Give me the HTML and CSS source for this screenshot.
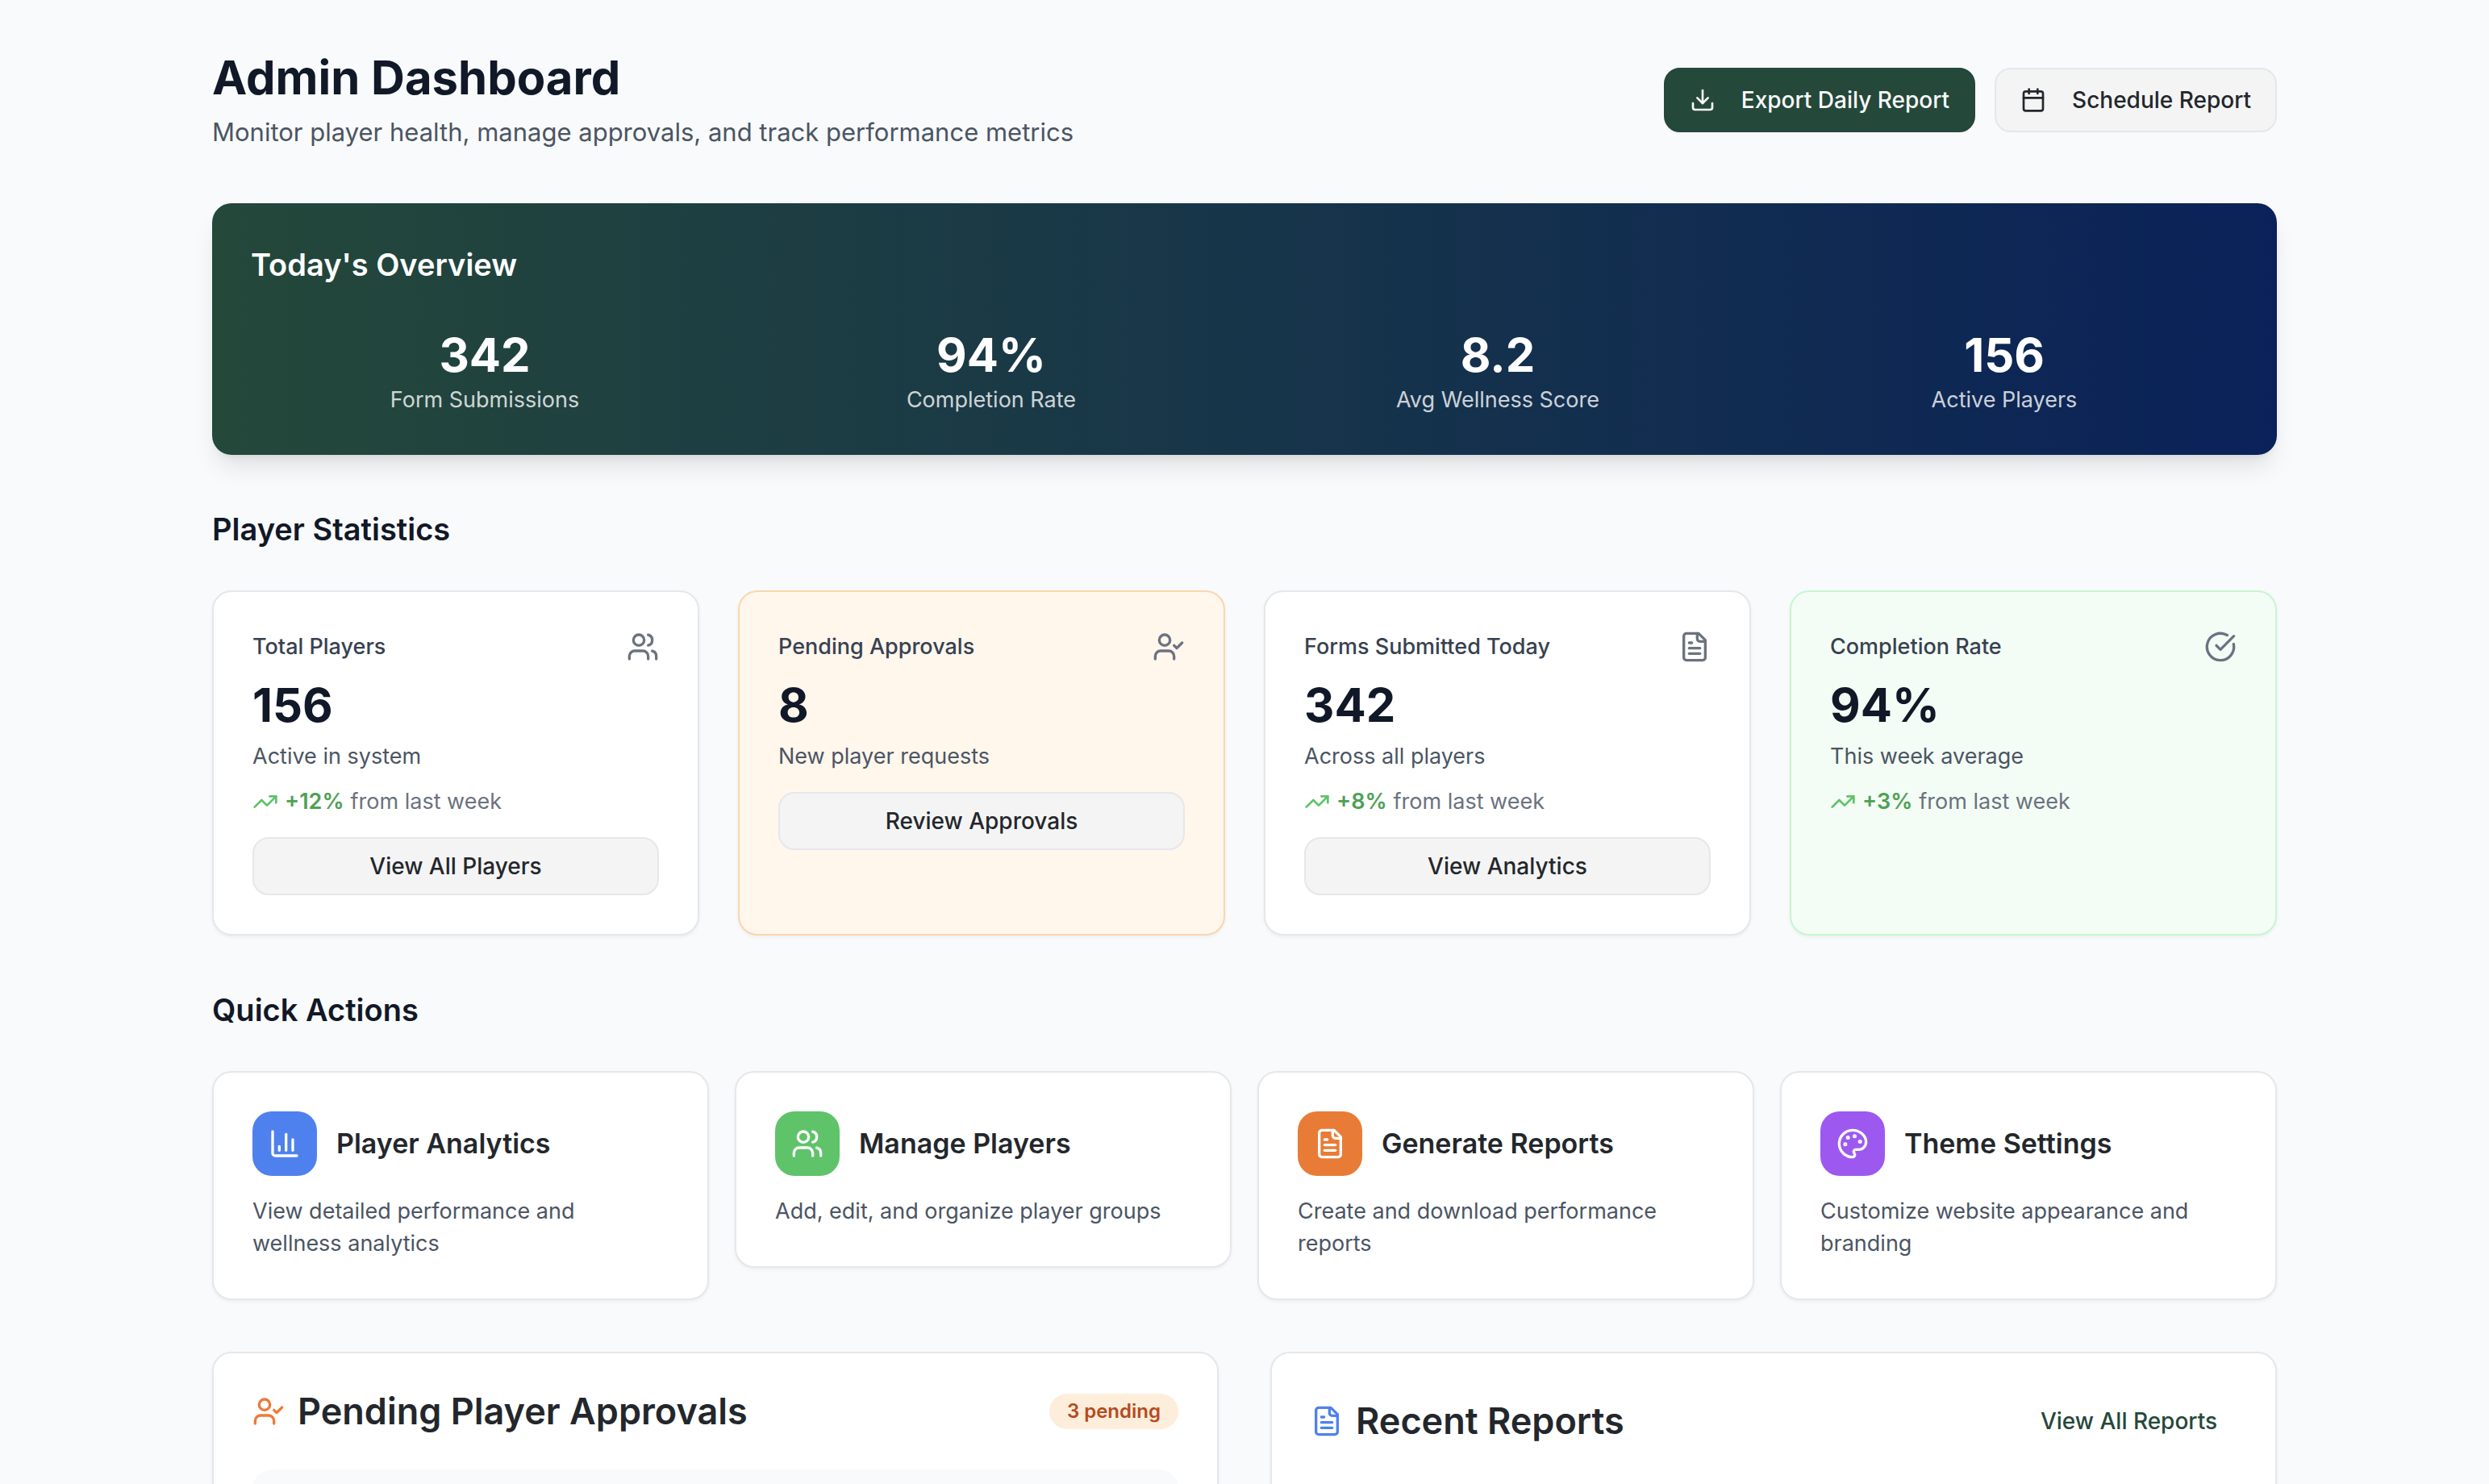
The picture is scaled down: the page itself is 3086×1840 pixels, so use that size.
FILE: index.html
```html
<!DOCTYPE html>
<html lang="en">
<head>
<meta charset="utf-8">
<title>Admin Dashboard</title>
<link rel="stylesheet" href="styles.css">
</head>
<body>
<svg class="sprite" aria-hidden="true">
  <symbol id="i-download" viewBox="0 0 24 24"><path d="M12 15V3"/><path d="M21 15v4a2 2 0 0 1-2 2H5a2 2 0 0 1-2-2v-4"/><path d="m7 10 5 5 5-5"/></symbol>
  <symbol id="i-calendar" viewBox="0 0 24 24"><path d="M8 2v4"/><path d="M16 2v4"/><rect width="18" height="18" x="3" y="4" rx="2"/><path d="M3 10h18"/></symbol>
  <symbol id="i-users" viewBox="0 0 24 24"><path d="M16 21v-2a4 4 0 0 0-4-4H6a4 4 0 0 0-4 4v2"/><circle cx="9" cy="7" r="4"/><path d="M22 21v-2a4 4 0 0 0-3-3.87"/><path d="M16 3.13a4 4 0 0 1 0 7.75"/></symbol>
  <symbol id="i-user-check" viewBox="0 0 24 24"><path d="m16 11 2 2 4-4"/><path d="M16 21v-2a4 4 0 0 0-4-4H6a4 4 0 0 0-4 4v2"/><circle cx="9" cy="7" r="4"/></symbol>
  <symbol id="i-file" viewBox="0 0 24 24"><path d="M15 2H6a2 2 0 0 0-2 2v16a2 2 0 0 0 2 2h12a2 2 0 0 0 2-2V7Z"/><path d="M14 2v4a2 2 0 0 0 2 2h4"/><path d="M10 9H8"/><path d="M16 13H8"/><path d="M16 17H8"/></symbol>
  <symbol id="i-check" viewBox="0 0 24 24"><path d="M21.801 10A10 10 0 1 1 17 3.335"/><path d="m9 11 3 3L22 4"/></symbol>
  <symbol id="i-trend" viewBox="0 0 24 24"><path d="M22 7l-8.5 8.5-5-5L2 17"/><path d="M16 7h6v6"/></symbol>
  <symbol id="i-chart" viewBox="0 0 24 24"><path d="M3 3v16a2 2 0 0 0 2 2h16"/><path d="M18 17V9"/><path d="M13 17V5"/><path d="M8 17v-3"/></symbol>
  <symbol id="i-palette" viewBox="0 0 24 24"><circle cx="13.5" cy="6.5" r=".5" fill="currentColor"/><circle cx="17.5" cy="10.5" r=".5" fill="currentColor"/><circle cx="8.5" cy="7.5" r=".5" fill="currentColor"/><circle cx="6.5" cy="12.5" r=".5" fill="currentColor"/><path d="M12 2C6.5 2 2 6.5 2 12s4.5 10 10 10c.926 0 1.648-.746 1.648-1.688 0-.437-.18-.835-.437-1.125-.29-.289-.438-.652-.438-1.125a1.64 1.64 0 0 1 1.668-1.668h1.996c3.051 0 5.555-2.503 5.555-5.554C21.965 6.012 17.461 2 12 2z"/></symbol>
</svg>
<main class="page">
  <header class="page-header">
    <div class="page-intro">
      <h1 class="page-title">Admin Dashboard</h1>
      <p class="page-subtitle">Monitor player health, manage approvals, and track performance metrics</p>
    </div>
    <div class="page-actions">
      <button class="btn btn-large btn-primary" type="button"><svg class="icon icon-small"><use href="#i-download"/></svg>Export Daily Report</button>
      <button class="btn btn-large" type="button"><svg class="icon icon-small"><use href="#i-calendar"/></svg>Schedule Report</button>
    </div>
  </header>

  <section class="overview">
    <h2 class="section-title">Today's Overview</h2>
    <dl class="overview-grid">
      <div class="overview-item"><dt class="overview-label">Form Submissions</dt><dd class="big-number">342</dd></div>
      <div class="overview-item"><dt class="overview-label">Completion Rate</dt><dd class="big-number">94%</dd></div>
      <div class="overview-item"><dt class="overview-label">Avg Wellness Score</dt><dd class="big-number">8.2</dd></div>
      <div class="overview-item"><dt class="overview-label">Active Players</dt><dd class="big-number">156</dd></div>
    </dl>
  </section>

  <section class="section">
    <h2 class="section-title">Player Statistics</h2>
    <div class="stats-grid">
      <article class="card">
        <div class="stat-head"><h3 class="stat-title">Total Players</h3><svg class="icon"><use href="#i-users"/></svg></div>
        <p class="big-number">156</p>
        <p class="stat-note">Active in system</p>
        <p class="trend"><svg class="icon icon-small trend-icon"><use href="#i-trend"/></svg><strong class="trend-value">+12%</strong> <span>from last week</span></p>
        <button class="btn btn-block" type="button">View All Players</button>
      </article>
      <article class="card card-warning">
        <div class="stat-head"><h3 class="stat-title">Pending Approvals</h3><svg class="icon"><use href="#i-user-check"/></svg></div>
        <p class="big-number">8</p>
        <p class="stat-note">New player requests</p>
        <button class="btn btn-block" type="button">Review Approvals</button>
      </article>
      <article class="card">
        <div class="stat-head"><h3 class="stat-title">Forms Submitted Today</h3><svg class="icon"><use href="#i-file"/></svg></div>
        <p class="big-number">342</p>
        <p class="stat-note">Across all players</p>
        <p class="trend"><svg class="icon icon-small trend-icon"><use href="#i-trend"/></svg><strong class="trend-value">+8%</strong> <span>from last week</span></p>
        <button class="btn btn-block" type="button">View Analytics</button>
      </article>
      <article class="card card-success">
        <div class="stat-head"><h3 class="stat-title">Completion Rate</h3><svg class="icon"><use href="#i-check"/></svg></div>
        <p class="big-number">94%</p>
        <p class="stat-note">This week average</p>
        <p class="trend"><svg class="icon icon-small trend-icon"><use href="#i-trend"/></svg><strong class="trend-value">+3%</strong> <span>from last week</span></p>
      </article>
    </div>
  </section>

  <section class="section">
    <h2 class="section-title">Quick Actions</h2>
    <div class="quick-grid">
      <a class="card quick" href="#analytics">
        <span class="quick-head"><span class="tile tile-blue"><svg class="icon"><use href="#i-chart"/></svg></span><span class="quick-title">Player Analytics</span></span>
        <span class="quick-text">View detailed performance and wellness analytics</span>
      </a>
      <a class="card quick" href="#players">
        <span class="quick-head"><span class="tile tile-green"><svg class="icon"><use href="#i-users"/></svg></span><span class="quick-title">Manage Players</span></span>
        <span class="quick-text">Add, edit, and organize player groups</span>
      </a>
      <a class="card quick" href="#reports">
        <span class="quick-head"><span class="tile tile-orange"><svg class="icon"><use href="#i-file"/></svg></span><span class="quick-title">Generate Reports</span></span>
        <span class="quick-text">Create and download performance reports</span>
      </a>
      <a class="card quick" href="#theme">
        <span class="quick-head"><span class="tile tile-purple"><svg class="icon"><use href="#i-palette"/></svg></span><span class="quick-title">Theme Settings</span></span>
        <span class="quick-text">Customize website appearance and branding</span>
      </a>
    </div>
  </section>

  <div class="panels">
    <section class="card">
      <div class="panel-head">
        <h2 class="panel-title"><svg class="icon icon-orange"><use href="#i-user-check"/></svg>Pending Player Approvals</h2>
        <span class="badge">3 pending</span>
      </div>
      <div class="request"></div>
    </section>
    <section class="card">
      <div class="panel-head">
        <h2 class="panel-title"><svg class="icon icon-blue"><use href="#i-file"/></svg>Recent Reports</h2>
        <button class="btn btn-ghost" type="button">View All Reports</button>
      </div>
    </section>
  </div>
</main>
</body>
</html>
```
FILE: styles.css
```css
* { box-sizing: border-box; }

body {
  margin: 0;
  height: 100vh;
  overflow: hidden;
  background: #f9fafc;
  color: #111827;
  font-family: Inter, "Liberation Sans", sans-serif;
  font-size: 27px;
  line-height: 40px;
}

h1, h2, h3, p, dl, dd { margin: 0; }

.sprite { display: none; }

.icon {
  flex: none;
  width: 40px;
  height: 40px;
  fill: none;
  stroke: currentColor;
  stroke-width: 2;
  stroke-linecap: round;
  stroke-linejoin: round;
}
.icon-small { width: 32px; height: 32px; }
.icon-orange { color: #ec7b36; }
.icon-blue { color: #4f81ee; }

.page {
  display: flex;
  flex-direction: column;
  gap: 64px;
  max-width: 2688px;
  margin: 0 auto;
  padding: 60px 64px;
}

.page-header {
  display: flex;
  align-items: center;
  justify-content: space-between;
}
.page-title {
  font-size: 58px;
  font-weight: 700;
  line-height: 72px;
}
.page-subtitle {
  margin-top: 8px;
  color: #4b5563;
  font-size: 31px;
  line-height: 48px;
}
.page-actions { display: flex; gap: 24px; }

.btn {
  display: flex;
  align-items: center;
  justify-content: center;
  height: 72px;
  padding: 0 22px;
  border: 2px solid #e5e7eb;
  border-radius: 20px;
  background: #f4f4f4;
  color: #23272c;
  font: inherit;
  font-size: 28px;
  font-weight: 500;
}
.btn-large { gap: 32px; height: 80px; padding: 0 30px; }
.btn-primary { border-color: #24483a; background: #24483a; color: #fafafa; }
.btn-block { width: 100%; margin-top: 24px; }
.btn-ghost { border-color: transparent; background: transparent; color: #24483a; }

.section-title {
  font-size: 38px;
  font-weight: 600;
  line-height: 56px;
}
.big-number {
  font-size: 58px;
  font-weight: 700;
  line-height: 72px;
}

.overview {
  padding: 48px;
  border-radius: 24px;
  background: linear-gradient(90deg, #24483a, #0a2259);
  box-shadow: 0 20px 30px -6px rgba(0, 0, 0, .1), 0 8px 12px -8px rgba(0, 0, 0, .1);
  color: #fff;
}
.overview-grid {
  display: grid;
  grid-template-columns: repeat(4, 1fr);
  gap: 48px;
  margin-top: 48px;
}
.overview-item {
  display: flex;
  flex-direction: column-reverse;
  text-align: center;
}
.overview-label { color: rgba(255, 255, 255, .8); }

.stats-grid, .quick-grid {
  display: grid;
  grid-template-columns: repeat(4, 1fr);
  gap: 48px;
  margin-top: 48px;
}
.quick-grid { gap: 32px; align-items: start; }

.card {
  padding: 48px;
  border: 2px solid #e5e7eb;
  border-radius: 24px;
  background: #fff;
  box-shadow: 0 2px 4px rgba(0, 0, 0, .05);
}
.card-warning { border-color: #f9d7ac; background: #fff6ec; }
.card-success { border-color: #c6f6d2; background: #f3fdf5; }

.stat-head {
  display: flex;
  align-items: center;
  justify-content: space-between;
  margin-bottom: 16px;
  color: #6b7280;
}
.stat-title { color: #374151; font-size: 27px; font-weight: 500; }
.stat-note { margin-top: 8px; color: #4b5563; }
.trend {
  display: flex;
  align-items: center;
  gap: 8px;
  margin-top: 16px;
  color: #6b7280;
}
.trend-icon { color: #5ec269; }
.trend-value { color: #4da153; font-weight: 600; }

.quick {
  display: flex;
  flex-direction: column;
  gap: 24px;
  color: #23272c;
  text-decoration: none;
}
.quick-head { display: flex; align-items: center; gap: 24px; }
.quick-title { font-size: 34px; font-weight: 600; }
.quick-text { color: #4b5563; }
.tile {
  display: grid;
  place-items: center;
  width: 80px;
  height: 80px;
  border-radius: 24px;
  color: #fff;
}
.tile-blue { background: #4f81ee; }
.tile-green { background: #5fc36a; }
.tile-orange { background: #e87c37; }
.tile-purple { background: #9d59ef; }

.panels {
  display: grid;
  grid-template-columns: repeat(2, 1fr);
  gap: 64px;
}
.panel-head {
  display: flex;
  align-items: center;
  justify-content: space-between;
}
.panel-title {
  display: flex;
  align-items: center;
  gap: 16px;
  color: #23272c;
  font-size: 45px;
  font-weight: 600;
  line-height: 48px;
}
.badge {
  padding: 6px 22px;
  border-radius: 22px;
  background: #fdeedb;
  color: #b64a20;
  font-size: 24px;
  font-weight: 600;
  line-height: 32px;
}
.request {
  min-height: 160px;
  margin-top: 48px;
  border-radius: 24px;
  background: #f9fafb;
}
```
